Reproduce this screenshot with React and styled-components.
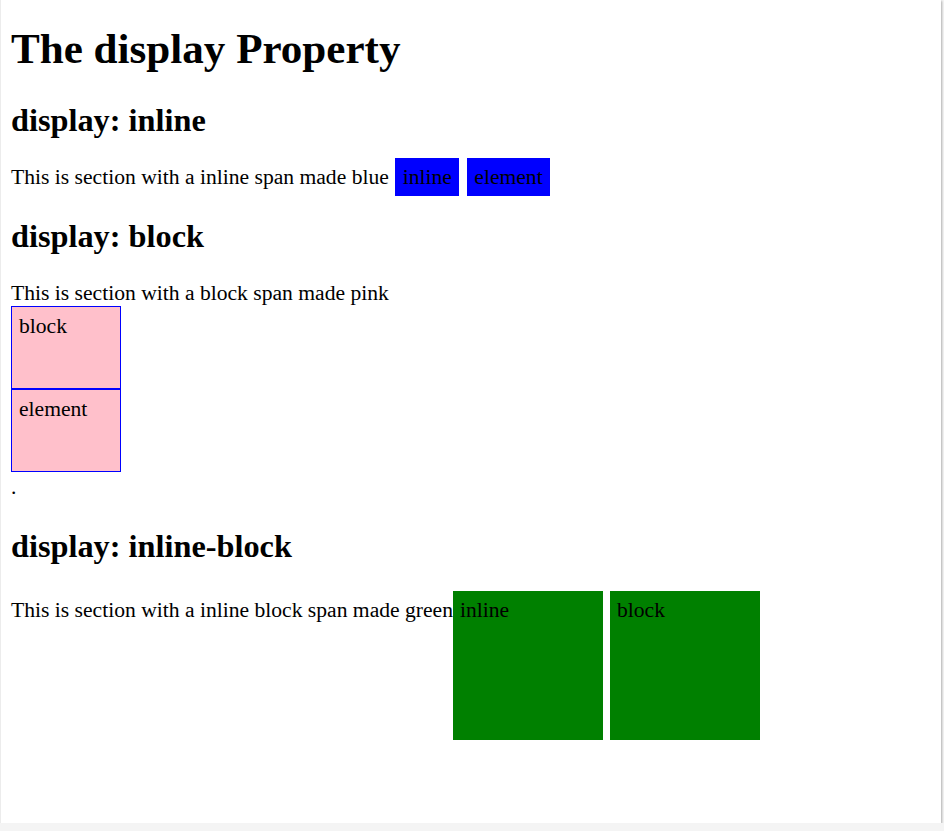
import React from 'react';
import styled, { createGlobalStyle } from 'styled-components';

const GlobalStyle = createGlobalStyle`
  html {
    background-color: #f4f4f4;
  }
  body {
    margin: 0;
    font-family: 'Liberation Serif', 'Times New Roman', serif;
    font-size: 21.6px;
    color: #000;
  }
`;

// white page with a thin shadow, like the browser viewport in the shot
const Page = styled.div`
  box-sizing: border-box;
  width: 941px;
  height: 823px;
  padding: 0 10px;
  background-color: #fff;
  border-left: 1px solid #ececec;
  box-shadow: 1px 1px 2px rgba(0, 0, 0, 0.28);
  overflow: hidden;
`;

const Title = styled.h1`
  font-size: 43.1px;
  font-weight: bold;
  margin: 24px 0 29px;
`;

const SectionHeading = styled.h2`
  font-size: 32.3px;
  font-weight: bold;
  margin: 28.5px 0 25.5px;
`;

const Paragraph = styled.p`
  margin: 21.6px 0;
  padding-bottom: ${({ $extra }) => $extra || '0'};
`;

// display: inline
const InlineChip = styled.span`
  display: inline;
  padding: 7px 7.5px;
  margin-left: ${({ $gap }) => ($gap ? '2px' : '1px')};
  background-color: blue;
`;

// display: block
const BlockChip = styled.span`
  display: block;
  width: 94px;
  height: 67px;
  padding: 7px;
  border: 1px solid blue;
  background-color: pink;
`;

// display: inline-block
const InlineBlockChip = styled.span`
  display: inline-block;
  width: 136px;
  height: 135px;
  padding: 7px;
  margin-left: ${({ $gap }) => ($gap ? '7px' : '0')};
  background-color: green;
`;

// the trailing full stop after the block spans
const Stop = styled.span`
  display: inline-block;
  padding-top: 3px;
`;

function App() {
  return (
    <>
      <GlobalStyle />
      <Page>
        <Title>The display Property</Title>

        <SectionHeading>display: inline</SectionHeading>
        <Paragraph>
          This is section with a inline span made blue <InlineChip>inline</InlineChip>{' '}
          <InlineChip $gap>element</InlineChip>
        </Paragraph>

        <SectionHeading>display: block</SectionHeading>
        <Paragraph>
          This is section with a block span made pink
          <BlockChip>block</BlockChip>
          <BlockChip>element</BlockChip>
          <Stop>.</Stop>
        </Paragraph>

        <SectionHeading>display: inline-block</SectionHeading>
        <Paragraph>
          This is section with a inline block span made green
          <InlineBlockChip>inline</InlineBlockChip>
          <InlineBlockChip $gap>block</InlineBlockChip>
        </Paragraph>
      </Page>
    </>
  );
}

export default App;
